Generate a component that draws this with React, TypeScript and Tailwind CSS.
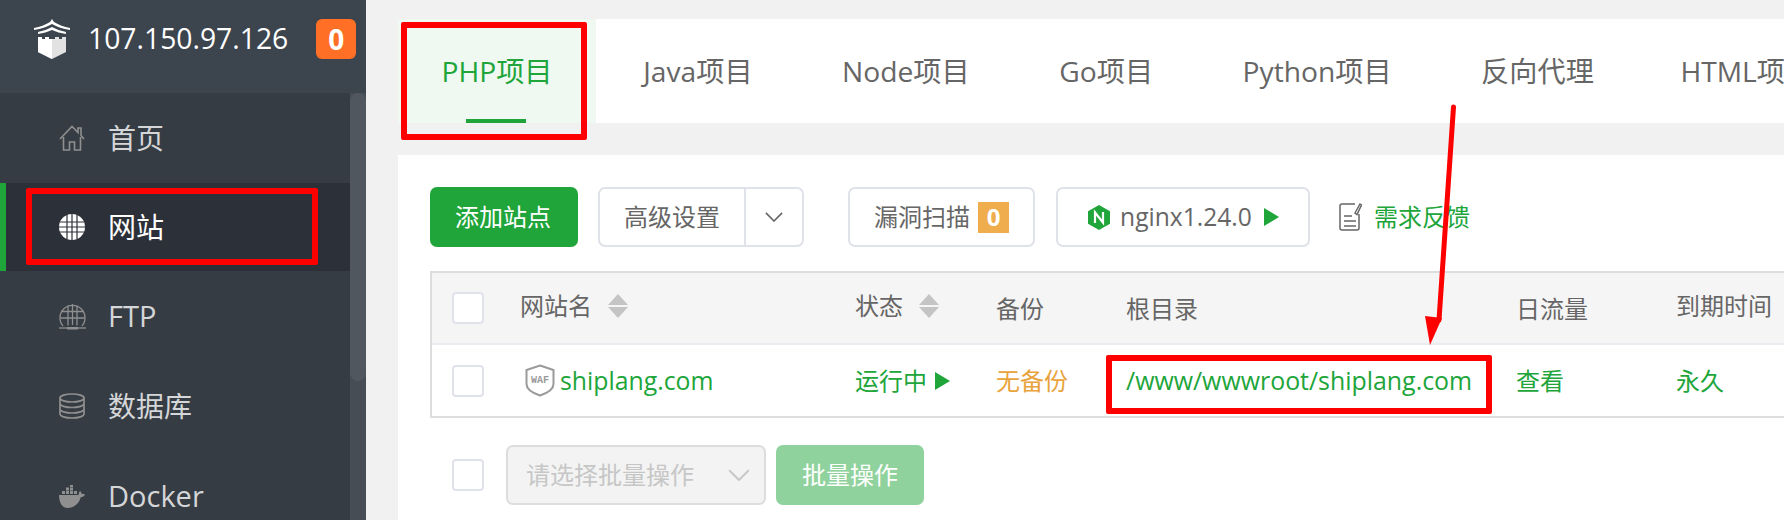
import type { ReactNode } from "react";

const FONT = "font-['Open_Sans','Noto_Sans_CJK_SC',sans-serif]";

function Castle() {
  return (
    <svg width="38" height="40" viewBox="0 0 38 40" className="shrink-0">
      <path d="M19 0l2 3c5 3 10 5 16 6v2C30 10 24 8 19 5 14 8 8 10 1 11V9c6-1 11-3 16-6z" fill="#fff" />
      <path d="M5 13c5-1 10-3 14-5 4 2 9 4 14 5v2c-5-1-10-2-14-4-4 2-9 3-14 4z" fill="#fff" />
      <path d="M5 18h4v2h3v-2h4v2h6v-2h4v2h3v-2h4v15l-14 7-14-7z" fill="#e2e2e2" />
      <path d="M5 18h4v2h3v-2h4v2h3v20l-14-7z" fill="#fff" />
    </svg>
  );
}

function NavIcon({ name }: { name: string }) {
  if (name === "home") {
    return (
      <svg width="26" height="26" viewBox="0 0 26 26" fill="none" stroke="#8f8f8f" strokeWidth="1.6">
        <path d="M1 14L13 1.500l6 6V3h3v7.500l3 3.500M4.500 12v13h6v-8h5v8h6V12" />
      </svg>
    );
  }
  if (name === "globe") {
    return (
      <svg width="26" height="26" viewBox="0 0 26 26">
        <circle cx="13" cy="13" r="13" fill="#fff" />
        <path d="M8 1v24M13 0v26M18 1v24M1 8h24M0 13h26M1 18h24" stroke="#2c3038" strokeWidth="1.200" fill="none" />
      </svg>
    );
  }
  if (name === "ftp") {
    return (
      <svg width="27" height="27" viewBox="0 0 27 27" fill="none" stroke="#8f8f8f" strokeWidth="1.300">
        <path d="M4 23A12.500 12.500 0 1 1 23 23" />
        <path d="M9 2.500v20M18 2.500v20M13.500 1v21M2 8.500h23M1.500 15h24" />
        <path d="M0 25h27" />
        <rect x="8" y="24" width="11" height="2.500" fill="#8f8f8f" stroke="none" />
      </svg>
    );
  }
  if (name === "db") {
    return (
      <svg width="26" height="26" viewBox="0 0 26 26" fill="none" stroke="#8f8f8f" strokeWidth="1.700">
        <ellipse cx="13" cy="5" rx="12" ry="4" />
        <path d="M1 5v16c0 2.200 5.400 4 12 4s12-1.800 12-4V5M1 10.500c0 2.200 5.400 4 12 4s12-1.800 12-4M1 16c0 2.200 5.400 4 12 4s12-1.800 12-4" />
      </svg>
    );
  }
  return (
    <svg width="26" height="23" viewBox="0 0 26 23" fill="#8f8f8f">
      <path d="M3 6h3v3H3zM7 6h3v3H7zM11 6h3v3h-3zM15 6h3v3h-3zM7 2.500h3v3H7zM11 2.500h3v3h-3zM11-1h3v3h-3z" />
      <path d="M0 10h19.500c.3-2 .8-3.200 1.500-4 1 .8 1.500 1.800 1.500 3 1-.3 2.200-.2 3.500.5-.8 1.800-2.300 2.800-4.300 2.800C20 19 15 23 8.500 23 3 23 0 17 0 10z" />
    </svg>
  );
}

function NavItem({ icon, label, latin }: { icon: string; label: string; latin?: boolean }) {
  return (
    <div className={`flex h-[90px] shrink-0 items-center pl-[59px] text-[#d4d6d8] ${latin ? "text-[29px]" : "text-[28px]"}`}>
      <span className="flex w-[49px] shrink-0 items-center">
        <NavIcon name={icon} />
      </span>
      {label}
    </div>
  );
}

function OutlineButton({ className, children }: { className: string; children: ReactNode }) {
  return (
    <div className={`flex h-[60px] items-center justify-center rounded-[7px] border-2 border-[#dfe2e9] bg-white text-[24px] text-[#666] ${className}`}>
      {children}
    </div>
  );
}

function Chevron({ color, size }: { color: string; size: number }) {
  return (
    <svg width={size} height={size * 0.55} viewBox="0 0 20 11" fill="none" stroke={color} strokeWidth="1.800">
      <path d="M1 1l9 9 9-9" />
    </svg>
  );
}

function SortArrows() {
  return (
    <svg width="20" height="24" viewBox="0 0 20 24" fill="#c4c4c4" className="ml-[16px]">
      <path d="M10 0l10 11H0zM0 13h20L10 24z" />
    </svg>
  );
}

function Checkbox() {
  return <div className="h-[32px] w-[32px] rounded-[4px] border-2 border-[#dfe2e9] bg-white" />;
}

function PlayIcon({ className }: { className: string }) {
  return (
    <svg width="15" height="18" viewBox="0 0 15 18" fill="#20a53a" className={className}>
      <path d="M0 0l15 9-15 9z" />
    </svg>
  );
}

const TABS = ["Java项目", "Node项目", "Go项目", "Python项目", "反向代理", "HTML项目"];

export default function App() {
  return (
    <div className={`relative flex h-[520px] w-[1784px] overflow-hidden bg-[#f1f1f1] ${FONT}`}>
      {/* sidebar */}
      <aside className="flex w-[366px] shrink-0 flex-col bg-[#363c43]">
        <div className="flex h-[93px] shrink-0 items-start bg-[#3c444d] pl-[33px] pt-[19px]">
          <Castle />
          <span className="ml-[17px] mt-[-1px] text-[28.3px] leading-[40px] text-white">107.150.97.126</span>
          <span className="ml-[28px] flex h-[40px] w-[40px] items-center justify-center rounded-[6px] bg-[#ff6f25] text-[28px] font-bold text-white">
            0
          </span>
        </div>
        <div className="flex min-h-0 flex-1">
          <nav className="flex w-[350px] shrink-0 flex-col">
            <NavItem icon="home" label="首页" />
            <div className="flex h-[88px] shrink-0 items-center border-l-[6px] border-[#20a53a] bg-[#2c3038] pl-[53px] text-[28px] text-white">
              <span className="flex w-[49px] shrink-0 items-center">
                <NavIcon name="globe" />
              </span>
              网站
            </div>
            <NavItem icon="ftp" label="FTP" latin />
            <NavItem icon="db" label="数据库" />
            <NavItem icon="docker" label="Docker" latin />
          </nav>
          <div className="w-[16px] shrink-0 bg-[#474d55]">
            <div className="h-[288px] rounded-[8px] bg-[#51575f]" />
          </div>
        </div>
      </aside>

      {/* main */}
      <main className="flex min-w-0 flex-1 flex-col pl-[32px] pt-[19px]">
        <div className="flex h-[104px] shrink-0 overflow-hidden bg-white text-[28.2px] whitespace-nowrap text-[#666]">
          <div className="relative flex h-full w-[198px] shrink-0 items-start justify-center bg-[#eff8f1] pt-[31px] text-[#20a53a]">
            PHP项目
            <span className="absolute bottom-0 left-[68px] h-[4px] w-[60px] bg-[#20a53a]" />
          </div>
          <div className="ml-[2.5px] flex">
            {TABS.map((tab) => (
              <div key={tab} className="shrink-0 px-[44.75px] pt-[31px] last:-ml-[3px]">
                {tab}
              </div>
            ))}
          </div>
        </div>

        <div className="mt-[32px] flex-1 bg-white pl-[32px] pt-[32px]">
          {/* toolbar */}
          <div className="flex h-[60px] items-center">
            <div className="flex h-[60px] w-[148px] items-center justify-center rounded-[7px] bg-[#20a53a] pr-[2px] text-[24px] text-white">
              添加站点
            </div>
            <OutlineButton className="ml-[20px] w-[206px]">
              <span className="flex h-full w-[146px] items-center justify-center border-r-2 border-[#dfe2e9]">高级设置</span>
              <span className="flex flex-1 items-center justify-center">
                <Chevron color="#666" size={18} />
              </span>
            </OutlineButton>
            <OutlineButton className="ml-[44px] w-[187px]">
              漏洞扫描
              <span className="ml-[8px] flex h-[31px] w-[31px] items-center justify-center bg-[#f0ad4e] text-[24px] font-bold text-white">0</span>
            </OutlineButton>
            <OutlineButton className="ml-[21px] w-[254px]">
              <svg width="24" height="25" viewBox="0 0 24 25" className="mr-[9px]">
                <path d="M12 0l11 6.250v12.500L12 25 1 18.750V6.250z" fill="#20a53a" />
                <path d="M8 18V7.500l8 10V7" fill="none" stroke="#fff" strokeWidth="2.200" />
              </svg>
              <span className="text-[24.600px]">nginx1.24.0</span>
              <PlayIcon className="ml-[12px]" />
            </OutlineButton>
            <svg width="24" height="30" viewBox="0 0 24 30" fill="none" stroke="#666" strokeWidth="1.500" className="ml-[28px]">
              <path d="M17 2H4a2 2 0 0 0-2 2v22a2 2 0 0 0 2 2h15a2 2 0 0 0 2-2V12M6 14h8M6 19h12M6 24h12" />
              <path d="M17 11l5-9 1.500 1-4.500 9.500z" />
            </svg>
            <span className="ml-[12px] text-[24px] text-[#20a53a]">需求反馈</span>
          </div>

          {/* table */}
          <div className="mt-[24px] h-[147px] border-2 border-r-0 border-[#dddddd] text-[24px]">
            <div className="grid h-[72px] grid-cols-[88px_335px_141px_130px_390px_160px_1fr] items-center border-b-2 border-[#e9ecf0] bg-[#f5f5f5] text-[#666]">
              <div className="pl-[20px]">
                <Checkbox />
              </div>
              <div className="flex items-center pb-[5px]">
                网站名
                <SortArrows />
              </div>
              <div className="flex items-center pb-[5px]">
                状态
                <SortArrows />
              </div>
              <div className="pt-[2px]">备份</div>
              <div className="pt-[2px]">根目录</div>
              <div className="pt-[2px]">日流量</div>
              <div className="pb-[5px]">到期时间</div>
            </div>
            <div className="grid h-[71px] grid-cols-[88px_335px_141px_130px_390px_160px_1fr] items-center text-[#20a53a]">
              <div className="pl-[20px]">
                <Checkbox />
              </div>
              <div className="flex items-center pl-[5px]">
                <svg width="30" height="33" viewBox="0 0 30 33" className="mr-[5px]">
                  <path d="M15 1.500L28.500 6v14c0 5-6 9-13.500 11.500C7.500 29 1.500 25 1.500 20V6z" fill="none" stroke="#9a9a9a" strokeWidth="2" />
                  <text x="15" y="19" textAnchor="middle" fontSize="10" fontWeight="700" fill="#9a9a9a" className="font-['Liberation_Mono',monospace]">
                    WAF
                  </text>
                </svg>
                <span className="text-[24.800px]">shiplang.com</span>
              </div>
              <div className="flex items-center whitespace-nowrap">
                运行中
                <PlayIcon className="ml-[8px]" />
              </div>
              <div className="text-[#e8a33d]">无备份</div>
              <div className="whitespace-nowrap text-[24.900px]">/www/wwwroot/shiplang.com</div>
              <div>查看</div>
              <div>永久</div>
            </div>
          </div>

          {/* batch actions */}
          <div className="mt-[27px] flex h-[60px] items-center pl-[22px]">
            <Checkbox />
            <div className="ml-[22px] flex h-[60px] w-[260px] items-center justify-between rounded-[7px] border-2 border-[#dddddd] bg-[#f3f3f3] pl-[18px] pr-[14px] text-[24px] text-[#c6c6c6]">
              请选择批量操作
              <Chevron color="#c6c6c6" size={22} />
            </div>
            <div className="ml-[10px] flex h-[60px] w-[148px] items-center justify-center rounded-[7px] bg-[#90d29d] text-[24px] text-white">
              批量操作
            </div>
          </div>
        </div>
      </main>

      {/* annotations drawn over the screenshot */}
      <div className="absolute left-[26px] top-[188px] h-[77px] w-[292px] rounded-[2px] border-[6px] border-[#ff0000]" />
      <div className="absolute left-[401px] top-[22px] h-[118px] w-[186px] rounded-[2px] border-[6px] border-[#ff0000]" />
      <div className="absolute left-[1106px] top-[355px] h-[59px] w-[386px] rounded-[2px] border-[6px] border-[#ff0000]" />
      <svg width="40" height="250" viewBox="0 0 40 250" className="absolute left-[1420px] top-[100px]">
        <path d="M33.500 7L19 220" stroke="#ff0000" strokeWidth="5" strokeLinecap="round" fill="none" />
        <path d="M5 216L22 218L10 245z" fill="#ff0000" />
      </svg>
    </div>
  );
}
